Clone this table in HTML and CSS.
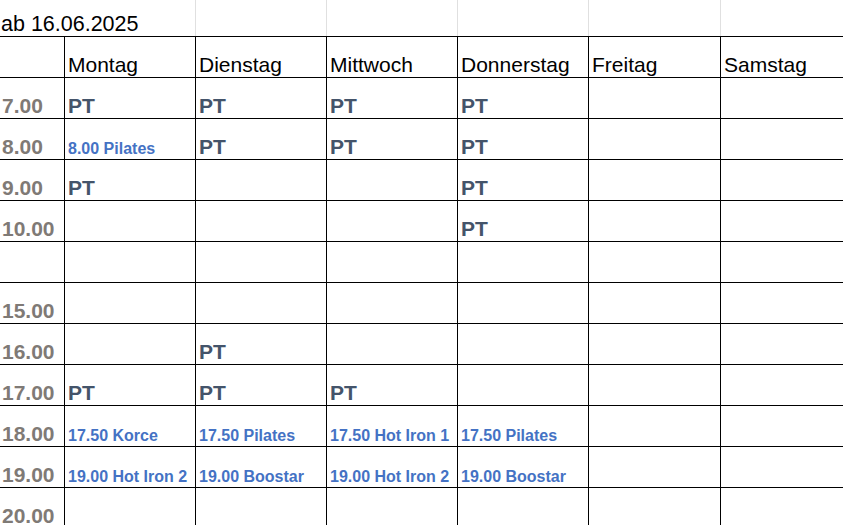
FILE: index.html
```html
<!DOCTYPE html>
<html lang="de">
<head>
<meta charset="utf-8">
<title>Kursplan ab 16.06.2025</title>
<link rel="stylesheet" href="styles.css">
</head>
<body>
<div class="sheet">
  <div class="cell title span2">ab 16.06.2025</div>
  <div class="cell top"></div>
  <div class="cell top"></div>
  <div class="cell top"></div>
  <div class="cell top"></div>
  <div class="cell top"></div>

  <div class="cell time first"></div>
  <div class="cell day">Montag</div>
  <div class="cell day">Dienstag</div>
  <div class="cell day">Mittwoch</div>
  <div class="cell day">Donnerstag</div>
  <div class="cell day">Freitag</div>
  <div class="cell day">Samstag</div>

  <div class="cell time">7.00</div>
  <div class="cell pt">PT</div>
  <div class="cell pt">PT</div>
  <div class="cell pt">PT</div>
  <div class="cell pt">PT</div>
  <div class="cell"></div>
  <div class="cell"></div>

  <div class="cell time">8.00</div>
  <div class="cell course">8.00 Pilates</div>
  <div class="cell pt">PT</div>
  <div class="cell pt">PT</div>
  <div class="cell pt">PT</div>
  <div class="cell"></div>
  <div class="cell"></div>

  <div class="cell time">9.00</div>
  <div class="cell pt">PT</div>
  <div class="cell"></div>
  <div class="cell"></div>
  <div class="cell pt">PT</div>
  <div class="cell"></div>
  <div class="cell"></div>

  <div class="cell time">10.00</div>
  <div class="cell"></div>
  <div class="cell"></div>
  <div class="cell"></div>
  <div class="cell pt">PT</div>
  <div class="cell"></div>
  <div class="cell"></div>

  <div class="cell time"></div>
  <div class="cell"></div>
  <div class="cell"></div>
  <div class="cell"></div>
  <div class="cell"></div>
  <div class="cell"></div>
  <div class="cell"></div>

  <div class="cell time">15.00</div>
  <div class="cell"></div>
  <div class="cell"></div>
  <div class="cell"></div>
  <div class="cell"></div>
  <div class="cell"></div>
  <div class="cell"></div>

  <div class="cell time">16.00</div>
  <div class="cell"></div>
  <div class="cell pt">PT</div>
  <div class="cell"></div>
  <div class="cell"></div>
  <div class="cell"></div>
  <div class="cell"></div>

  <div class="cell time">17.00</div>
  <div class="cell pt">PT</div>
  <div class="cell pt">PT</div>
  <div class="cell pt">PT</div>
  <div class="cell"></div>
  <div class="cell"></div>
  <div class="cell"></div>

  <div class="cell time">18.00</div>
  <div class="cell course">17.50 Korce</div>
  <div class="cell course">17.50 Pilates</div>
  <div class="cell course">17.50 Hot Iron 1</div>
  <div class="cell course">17.50 Pilates</div>
  <div class="cell"></div>
  <div class="cell"></div>

  <div class="cell time">19.00</div>
  <div class="cell course">19.00 Hot Iron 2</div>
  <div class="cell course">19.00 Boostar</div>
  <div class="cell course">19.00 Hot Iron 2</div>
  <div class="cell course">19.00 Boostar</div>
  <div class="cell"></div>
  <div class="cell"></div>

  <div class="cell time">20.00</div>
  <div class="cell"></div>
  <div class="cell"></div>
  <div class="cell"></div>
  <div class="cell"></div>
  <div class="cell"></div>
  <div class="cell"></div>
</div>
</body>
</html>
```
FILE: styles.css
```css
html, body {
  margin: 0;
  padding: 0;
  background: #ffffff;
  overflow: hidden;
}

.sheet {
  display: grid;
  grid-template-columns: 64px 131px 131px 131px 131px 132px 1fr;
  grid-template-rows: 36px repeat(12, 41px);
  width: 843px;
  font-family: "Liberation Sans", Arial, sans-serif;
  color: #000;
}

.cell {
  box-sizing: border-box;
  border-top: 1px solid #000;
  border-left: 1px solid #000;
  display: flex;
  align-items: flex-end;
  padding: 0 0 0 3px;
  white-space: nowrap;
  overflow: hidden;
  font-size: 21px;
  line-height: 24px;
}

.cell.time {
  border-left: none;
  padding-left: 2px;
  color: #7f7a76;
  font-weight: bold;
}

.cell.title {
  border: none;
  padding: 0 0 0 1px;
  font-size: 21.5px;
}

.span2 {
  grid-column: span 2;
}

.cell.top {
  border-top: none;
  border-left: 1px solid #e0e0e0;
}

.cell.pt {
  color: #44546a;
  font-weight: bold;
}

.cell.course {
  color: #4472c4;
  font-weight: bold;
  font-size: 16px;
  line-height: 19px;
  padding-bottom: 1px;
}
```
